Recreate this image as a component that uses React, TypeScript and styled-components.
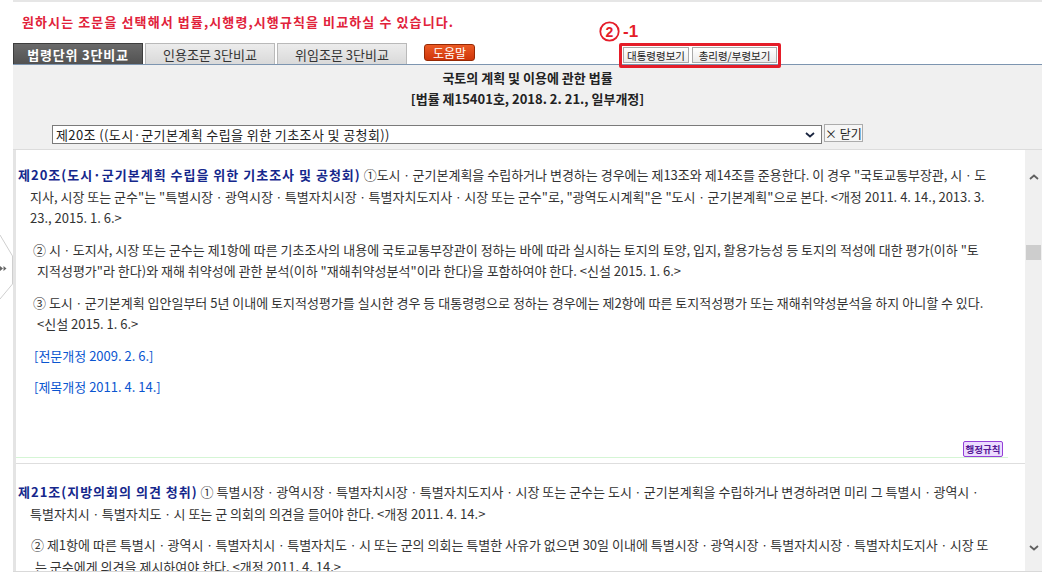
import React from "react";
import styled, { createGlobalStyle } from "styled-components";

const GlobalStyle = createGlobalStyle`
  html, body {
    margin: 0;
    padding: 0;
    background: #fff;
  }
  body {
    font-family: "Noto Sans CJK KR", "Liberation Sans", sans-serif;
    font-size: 12px;
    color: #333;
  }
`;

const Page = styled.div`
  position: relative;
  width: 1042px;
  height: 572px;
  overflow: hidden;
  box-sizing: border-box;
  padding-left: 13px;
`;

const Frame = styled.div`
  border-top: 2px solid #e6e6e6;
`;

const Notice = styled.div`
  padding: 11px 0 0 9px;
  line-height: 18px;
  font-size: 13px;
  font-weight: bold;
  letter-spacing: 1.1px;
  color: #e1223a;
  white-space: nowrap;
`;

const TabRow = styled.div`
  display: flex;
  align-items: flex-start;
  height: 21px;
  margin-top: 12px;
`;

const Tab = styled.div<{ $active?: boolean }>`
  width: 130px;
  height: 21px;
  box-sizing: border-box;
  margin-right: 2px;
  display: flex;
  align-items: center;
  justify-content: center;
  border: 1px solid ${(p) => (p.$active ? "#3d3d3d" : "#b9b9b9")};
  border-bottom: none;
  background: ${(p) =>
    p.$active
      ? "linear-gradient(#6a6a6a, #525252)"
      : "linear-gradient(#ececec, #d9d9d9)"};
  color: ${(p) => (p.$active ? "#fff" : "#333")};
  font-weight: ${(p) => (p.$active ? "bold" : "normal")};
  letter-spacing: ${(p) => (p.$active ? "0.8px" : "0")};
  font-size: 13px;
  white-space: nowrap;
`;

const HelpButton = styled.div`
  width: 51px;
  height: 17px;
  box-sizing: border-box;
  margin: 1px 0 0 15px;
  display: flex;
  align-items: center;
  justify-content: center;
  border: 1px solid #962904;
  border-radius: 3px;
  background: linear-gradient(#ec5a24, #cf350a);
  color: #fff;
  font-size: 12px;
  white-space: nowrap;
`;

const ButtonGroup = styled.div`
  position: relative;
  display: flex;
  gap: 3px;
  margin: 4px 0 0 148px;

  &::after {
    content: "";
    position: absolute;
    top: -4px;
    left: -4px;
    right: -4px;
    bottom: -5px;
    border: 3px solid #e51d29;
    border-radius: 2px;
    pointer-events: none;
  }
`;

const SmallButton = styled.div<{ $w: number }>`
  width: ${(p) => p.$w}px;
  height: 16px;
  box-sizing: border-box;
  display: flex;
  align-items: center;
  justify-content: center;
  border: 1px solid #a9a9a9;
  background: linear-gradient(#ffffff, #ebebeb);
  color: #222;
  font-size: 10.5px;
  white-space: nowrap;
`;

const Callout = styled.div`
  position: absolute;
  left: -24px;
  top: -26px;
  display: flex;
  align-items: center;
  gap: 3px;
  color: #e51d29;
  font-family: "Liberation Sans", sans-serif;
  font-weight: bold;
  font-size: 17px;
`;

const Panel = styled.div`
  border-top: 1px solid #7d95b0;
  background: #f0f0f0;
  padding: 2px 0 5px;
  text-align: center;
`;

const Title = styled.div`
  font-size: 13px;
  font-weight: bold;
  line-height: 21px;
  color: #222;
`;

const SelectRow = styled.div`
  display: flex;
  align-items: flex-start;
  gap: 2px;
  margin-top: 16px;
  padding-left: 39px;
`;

const Select = styled.div`
  width: 770px;
  height: 19px;
  box-sizing: border-box;
  display: flex;
  align-items: center;
  justify-content: space-between;
  padding: 0 6px 0 3px;
  border: 1px solid #7a7a7a;
  background: #fff;
  color: #222;
  font-size: 13px;
  letter-spacing: 0.4px;
  text-align: left;
`;

const CloseButton = styled.div`
  width: 39px;
  height: 18px;
  box-sizing: border-box;
  margin-top: -1px;
  display: flex;
  align-items: center;
  justify-content: center;
  border: 1px solid #acacac;
  background: #f6f6f6;
  color: #222;
  font-size: 12px;
  white-space: nowrap;
`;

const Body = styled.div`
  display: flex;
  height: 421px;
  border-top: 1px solid #dcdcdc;
  border-bottom: 2px solid #d9d9d9;
`;

const Main = styled.div`
  flex: 1;
  border-left: 3px solid #e4e4e4;
  background: #fff;
  overflow: hidden;
`;

const Article = styled.div<{ $first?: boolean }>`
  display: flex;
  flex-direction: column;
  box-sizing: border-box;
  ${(p) =>
    p.$first
      ? `
    height: 308px;
    margin-right: 17px;
    padding-top: 14px;
    border-bottom: 1px solid #d5f5d5;
  `
      : `
    margin-top: 5px;
    border-top: 1px solid #dedede;
    padding-top: 17px;
  `}
`;

const Para = styled.p<{ $pad: number; $indent: number; $blue?: boolean }>`
  margin: 0 0 10px;
  padding-left: ${(p) => p.$pad}px;
  text-indent: ${(p) => p.$indent}px;
  line-height: 21.5px;
  white-space: nowrap;
  font-size: 13px;
  color: ${(p) => (p.$blue ? "#0a55d0" : "#333")};
`;

const Heading = styled.span`
  color: #15278c;
  font-weight: bold;
  letter-spacing: 1px;
`;

const Badge = styled.div`
  align-self: flex-end;
  margin-top: auto;
  margin-right: 5px;
  width: 40px;
  height: 16px;
  box-sizing: border-box;
  display: flex;
  align-items: center;
  justify-content: center;
  border: 1px solid #9440d8;
  border-radius: 2px;
  background: #ecdcff;
  color: #561a96;
  font-size: 9.5px;
  font-weight: bold;
  white-space: nowrap;
`;

const Scrollbar = styled.div`
  width: 17px;
  background: #f0f0f0;
  display: flex;
  flex-direction: column;
  align-items: center;
`;

const Thumb = styled.div`
  width: 15px;
  height: 15px;
  margin-top: 65px;
  background: #cdcdcd;
`;

const ArrowSlot = styled.div<{ $bottom?: boolean }>`
  display: flex;
  ${(p) => (p.$bottom ? "margin-top: auto; margin-bottom: 20px;" : "margin-top: 24px;")}
`;

const Handle = styled.div`
  position: absolute;
  left: 0;
  top: 232px;
`;

function Chevron({ up, color = "#606060" }: { up?: boolean; color?: string }) {
  return (
    <svg width="10" height="6" viewBox="0 0 10 6">
      <path
        d={up ? "M1 5 L5 1.5 L9 5" : "M1 1 L5 4.5 L9 1"}
        fill="none"
        stroke={color}
        strokeWidth="1.8"
      />
    </svg>
  );
}

export default function App() {
  return (
    <Page>
      <GlobalStyle />
      <Frame>
        <Notice>원하시는 조문을 선택해서 법률,시행령,시행규칙을 비교하실 수 있습니다.</Notice>
        <TabRow>
          <Tab $active>법령단위 3단비교</Tab>
          <Tab>인용조문 3단비교</Tab>
          <Tab>위임조문 3단비교</Tab>
          <HelpButton>도움말</HelpButton>
          <ButtonGroup>
            <Callout>
              <svg width="21" height="21" viewBox="0 0 21 21">
                <circle cx="10.5" cy="10.5" r="9.2" fill="none" stroke="#e51d29" strokeWidth="1.8" />
                <text x="10.5" y="15.5" textAnchor="middle" fontSize="14" fontWeight="bold" fill="#e51d29" fontFamily="Liberation Sans, sans-serif">2</text>
              </svg>
              <span>-1</span>
            </Callout>
            <SmallButton $w={66}>대통령령보기</SmallButton>
            <SmallButton $w={85}>총리령/부령보기</SmallButton>
          </ButtonGroup>
        </TabRow>
        <Panel>
          <Title>국토의 계획 및 이용에 관한 법률</Title>
          <Title>[법률 제15401호, 2018. 2. 21., 일부개정]</Title>
          <SelectRow>
            <Select>
              <span>제20조 ((도시·군기본계획 수립을 위한 기초조사 및 공청회))</span>
              <Chevron color="#1a2540" />
            </Select>
            <CloseButton>× 닫기</CloseButton>
          </SelectRow>
        </Panel>
        <Body>
          <Main>
            <Article $first>
              <Para $pad={14} $indent={-12}>
                <Heading>제20조(도시·군기본계획 수립을 위한 기초조사 및 공청회)</Heading> ①도시ㆍ군기본계획을 수립하거나 변경하는 경우에는 제13조와 제14조를 준용한다. 이 경우 "국토교통부장관, 시ㆍ도
                <br />
                지사, 시장 또는 군수"는 "특별시장ㆍ광역시장ㆍ특별자치시장ㆍ특별자치도지사ㆍ시장 또는 군수"로, "광역도시계획"은 "도시ㆍ군기본계획"으로 본다. &lt;개정 2011. 4. 14., 2013. 3.
                <br />
                23., 2015. 1. 6.&gt;
              </Para>
              <Para $pad={21} $indent={-4}>
                ② 시ㆍ도지사, 시장 또는 군수는 제1항에 따른 기초조사의 내용에 국토교통부장관이 정하는 바에 따라 실시하는 토지의 토양, 입지, 활용가능성 등 토지의 적성에 대한 평가(이하 "토
                <br />
                지적성평가"라 한다)와 재해 취약성에 관한 분석(이하 "재해취약성분석"이라 한다)을 포함하여야 한다. &lt;신설 2015. 1. 6.&gt;
              </Para>
              <Para $pad={21} $indent={-4}>
                ③ 도시ㆍ군기본계획 입안일부터 5년 이내에 토지적성평가를 실시한 경우 등 대통령령으로 정하는 경우에는 제2항에 따른 토지적성평가 또는 재해취약성분석을 하지 아니할 수 있다.
                <br />
                &lt;신설 2015. 1. 6.&gt;
              </Para>
              <Para $pad={18} $indent={0} $blue>
                [전문개정 2009. 2. 6.]
              </Para>
              <Para $pad={18} $indent={0} $blue>
                [제목개정 2011. 4. 14.]
              </Para>
              <Badge>행정규칙</Badge>
            </Article>
            <Article>
              <Para $pad={14} $indent={-12}>
                <Heading>제21조(지방의회의 의견 청취)</Heading> ① 특별시장ㆍ광역시장ㆍ특별자치시장ㆍ특별자치도지사ㆍ시장 또는 군수는 도시ㆍ군기본계획을 수립하거나 변경하려면 미리 그 특별시ㆍ광역시ㆍ
                <br />
                특별자치시ㆍ특별자치도ㆍ시 또는 군 의회의 의견을 들어야 한다. &lt;개정 2011. 4. 14.&gt;
              </Para>
              <Para $pad={19} $indent={-4}>
                ② 제1항에 따른 특별시ㆍ광역시ㆍ특별자치시ㆍ특별자치도ㆍ시 또는 군의 의회는 특별한 사유가 없으면 30일 이내에 특별시장ㆍ광역시장ㆍ특별자치시장ㆍ특별자치도지사ㆍ시장 또
                <br />
                는 군수에게 의견을 제시하여야 한다. &lt;개정 2011. 4. 14.&gt;
              </Para>
            </Article>
          </Main>
          <Scrollbar>
            <ArrowSlot>
              <Chevron up />
            </ArrowSlot>
            <Thumb />
            <ArrowSlot $bottom>
              <Chevron />
            </ArrowSlot>
          </Scrollbar>
        </Body>
      </Frame>
      <Handle>
        <svg width="13" height="70" viewBox="0 0 13 70">
          <path d="M0 3 L12.5 24 L12.5 52 L0 67" fill="#fff" stroke="#cfcfcf" strokeWidth="1" />
          <path d="M0 34 L3 36.5 L0 39 Z M3.5 34 L6.5 36.5 L3.5 39 Z" fill="#666" />
        </svg>
      </Handle>
    </Page>
  );
}
